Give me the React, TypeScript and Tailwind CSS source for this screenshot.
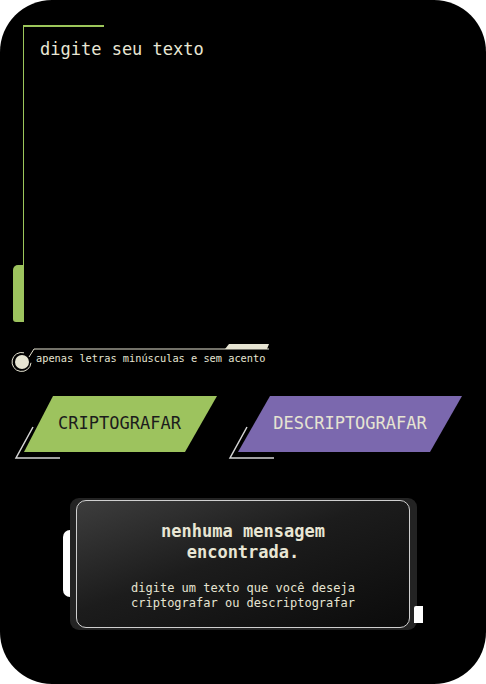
const mono = "font-['DejaVu_Sans_Mono','Liberation_Mono',monospace]";

function CornerMark({ className }: { className: string }) {
  return (
    <svg className={className} width="50" height="36" viewBox="0 0 50 36" fill="none">
      <path d="M19 3 L2 34 L46 34" stroke="#d4d4d4" strokeWidth="1.5" />
    </svg>
  );
}

function HintMark() {
  return (
    <svg className="absolute left-0 top-0" width="280" height="30" viewBox="0 0 280 30" fill="none">
      <path d="M31 18.8 A9.5 9.5 0 1 1 24 8.8" stroke="#e6e4d2" strokeWidth="1" />
      <circle cx="22" cy="18" r="7" fill="#e6e4d2" />
      <path d="M29 13 L34 5 L269 5" stroke="#e6e4d2" strokeWidth="1" />
      <polygon points="229,0 269,0 267,5 225,5" fill="#e6e4d2" />
    </svg>
  );
}

export default function App() {
  return (
    <div className="w-[486px] h-[684px] bg-white">
      <div className={`w-[486px] h-[684px] bg-black rounded-[52px] flex flex-col pt-[25px] overflow-hidden ${mono}`}>
        {/* campo de texto */}
        <div className="relative ml-[23px] h-[297px] border-l-[1.5px] border-[#9cc65a] pl-[16px] pt-[14px]">
          <span className="absolute left-0 top-0 w-[80px] h-[1.5px] bg-[#9cc65a]" />
          <span className="absolute left-[-11px] top-[240px] w-[11px] h-[57px] bg-[#9dc35e] rounded-tl-[5px] rounded-bl-[3px]" />
          <p className="text-[17px] leading-[20px] text-[#e8e6d4]">digite seu texto</p>
        </div>

        {/* aviso */}
        <div className="relative mt-[22px] h-[28px] pl-[36px] pt-[7px]">
          <HintMark />
          <p className="text-[10.3px] leading-[14px] text-[#e6e4d2]">apenas letras minúsculas e sem acento</p>
        </div>

        {/* botões */}
        <div className="flex mt-[24px] pl-[24px] gap-[21px]">
          <div className="relative">
            <CornerMark className="absolute left-[-10px] top-[28px]" />
            <button className="w-[193px] h-[56px] bg-[#9dc35e] text-[#1c1c1c] text-[17px] flex items-center justify-center pr-[2px] [clip-path:polygon(29px_0,100%_0,calc(100%-32px)_100%,0_100%)]">
              CRIPTOGRAFAR
            </button>
          </div>
          <div className="relative">
            <CornerMark className="absolute left-[-10px] top-[28px]" />
            <button className="w-[224px] h-[56px] bg-[#7b68ae] text-[#e6e4d2] text-[17px] flex items-center justify-center [clip-path:polygon(32px_0,100%_0,calc(100%-32px)_100%,0_100%)]">
              DESCRIPTOGRAFAR
            </button>
          </div>
        </div>

        {/* resultado */}
        <div className="relative ml-[70px] mt-[46px] w-[347px] h-[132px]">
          <span className="absolute left-[-7px] top-[32px] w-[12px] h-[67px] bg-white rounded-l-[7px]" />
          <div className="relative w-full h-full rounded-[9px] bg-[#232323] pl-[6px] pr-[7px] py-[2px]">
            <div className="w-full h-full rounded-[10px] border border-[#cfcfcf] bg-[linear-gradient(160deg,#3d3d3d_0%,#1c1c1c_45%,#0b0b0b_100%)] flex flex-col items-center pt-[20px] text-center">
              <p className="font-bold text-[17px] leading-[21px] text-[#e8e6d4]">
                nenhuma mensagem
                <br />
                encontrada.
              </p>
              <p className="mt-[18px] text-[12px] leading-[15px] text-[#e6e4d2]">
                digite um texto que você deseja
                <br />
                criptografar ou descriptografar
              </p>
            </div>
          </div>
          <span className="absolute left-[344px] top-[108px] w-[9px] h-[17px] bg-white rounded-tl-[2px]" />
        </div>
      </div>
    </div>
  );
}
